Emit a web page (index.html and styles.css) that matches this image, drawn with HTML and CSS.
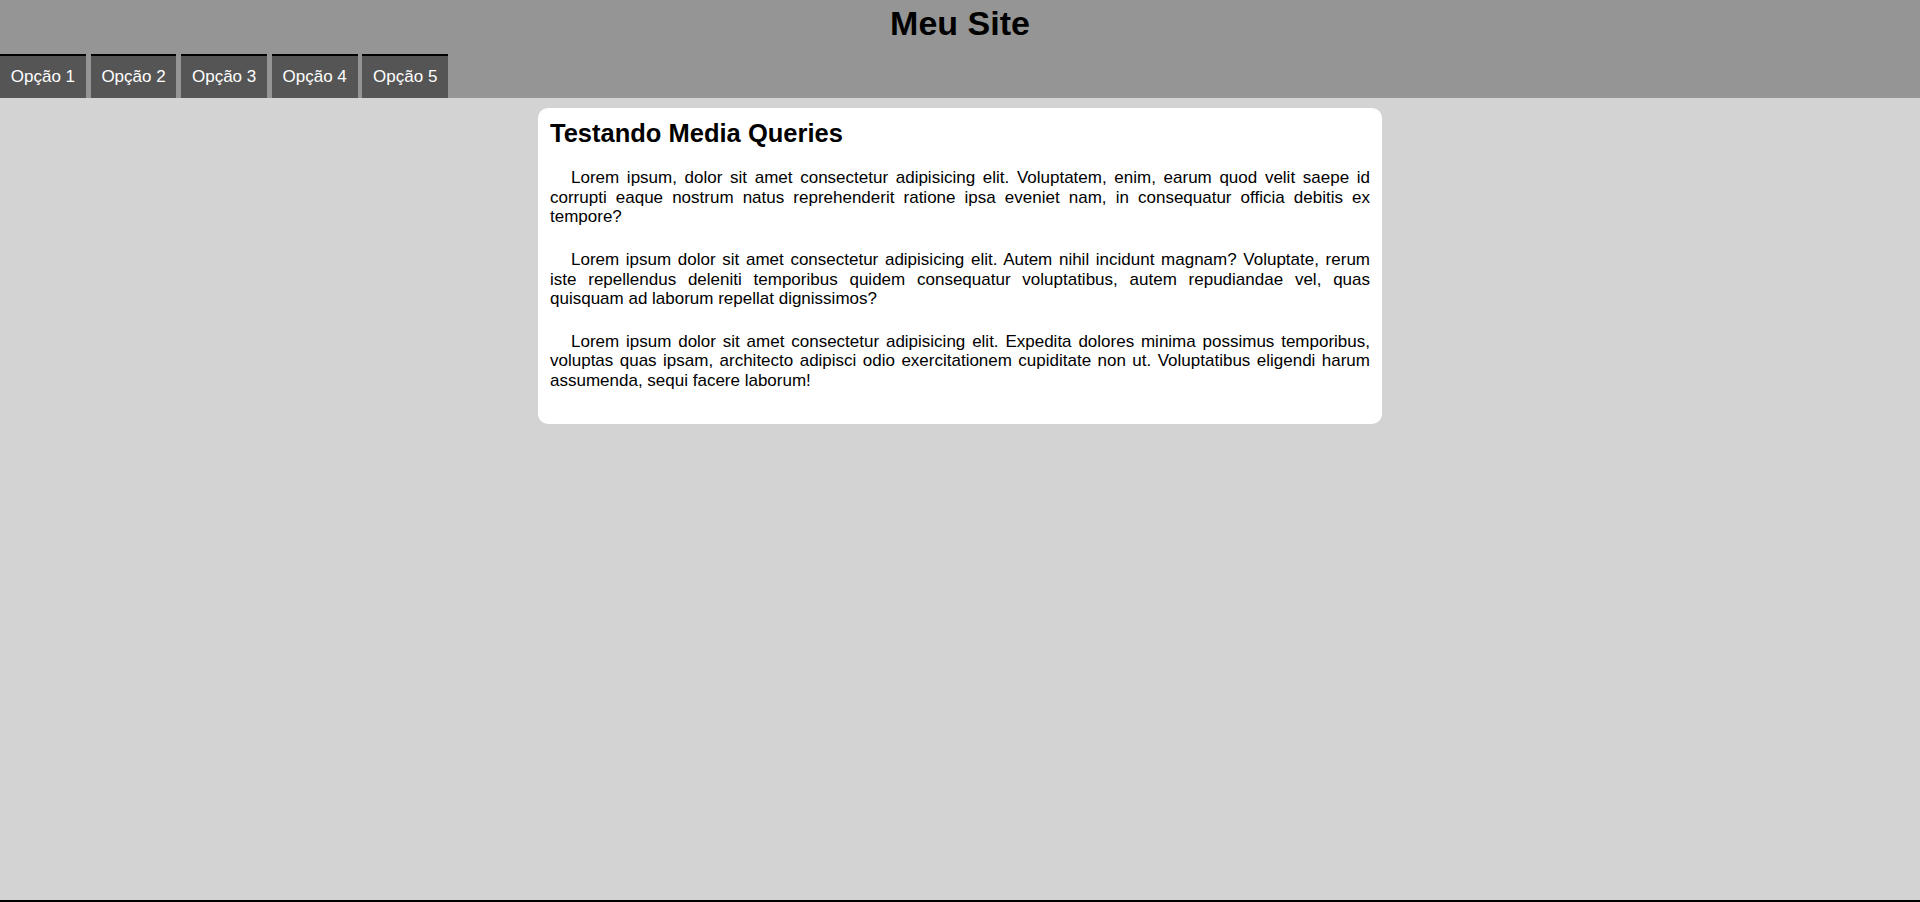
FILE: index.html
```html
<!DOCTYPE html>
<html lang="pt-BR">
<head>
<meta charset="utf-8">
<title>Meu Site</title>
<link rel="stylesheet" href="styles.css">
</head>
<body>
<div class="page">
  <header class="site-header">
    <h1 class="site-title">Meu Site</h1>
    <nav class="menu">
      <a class="menu-item" href="#">Opção 1</a>
      <a class="menu-item" href="#">Opção 2</a>
      <a class="menu-item" href="#">Opção 3</a>
      <a class="menu-item" href="#">Opção 4</a>
      <a class="menu-item" href="#">Opção 5</a>
    </nav>
  </header>
  <main class="content">
    <article class="card">
      <h2 class="card-title">Testando Media Queries</h2>
      <p class="card-text">Lorem ipsum, dolor sit amet consectetur adipisicing elit. Voluptatem, enim, earum quod velit saepe id corrupti eaque nostrum natus reprehenderit ratione ipsa eveniet nam, in consequatur officia debitis ex tempore?</p>
      <p class="card-text">Lorem ipsum dolor sit amet consectetur adipisicing elit. Autem nihil incidunt magnam? Voluptate, rerum iste repellendus deleniti temporibus quidem consequatur voluptatibus, autem repudiandae vel, quas quisquam ad laborum repellat dignissimos?</p>
      <p class="card-text">Lorem ipsum dolor sit amet consectetur adipisicing elit. Expedita dolores minima possimus temporibus, voluptas quas ipsam, architecto adipisci odio exercitationem cupiditate non ut. Voluptatibus eligendi harum assumenda, sequi facere laborum!</p>
    </article>
  </main>
  <footer class="site-footer"></footer>
</div>
</body>
</html>
```

FILE: styles.css
```css
* {
  box-sizing: border-box;
}

html, body {
  margin: 0;
  padding: 0;
}

body {
  background: #d3d3d3;
  font-family: "Liberation Sans", Arial, sans-serif;
  font-size: 17px;
  color: #000;
}

.page {
  min-height: 100vh;
  display: flex;
  flex-direction: column;
}

.site-header {
  background: #959595;
  padding-top: 4px;
}

.site-title {
  margin: 0 0 11px;
  font-size: 34px;
  line-height: 39px;
  font-weight: bold;
  text-align: center;
}

.menu {
  display: flex;
  gap: 4.73px;
}

.menu-item {
  display: block;
  background: #555555;
  color: #fff;
  text-decoration: none;
  border-top: 2px solid #000;
  padding: 10.9px 10.8px;
  line-height: normal;
}

.content {
  flex: 1;
  padding-top: 10px;
}

.card {
  width: 844px;
  margin: 0 auto;
  background: #fff;
  border-radius: 10px;
  padding: 10px 12px;
}

.card-title {
  margin: 0 0 20px;
  font-size: 25.5px;
  line-height: 1.2;
  font-weight: bold;
}

.card-text {
  margin: 0 0 23.5px;
  line-height: 19.4px;
  text-align: justify;
  text-indent: 21px;
}

.site-footer {
  border-top: 2px solid #000;
  height: 2px;
}
```
